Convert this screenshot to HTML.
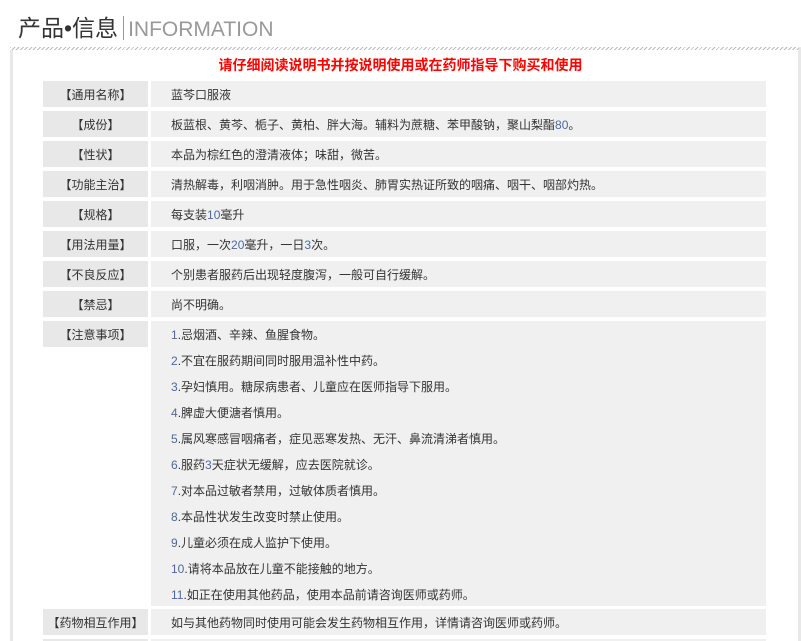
<!DOCTYPE html>
<html style="height:641px;overflow:hidden"><head><meta charset="utf-8"><style>
body{margin:0;width:801px;height:641px;overflow:hidden;background:#fff;font-family:"Liberation Sans","Noto Sans CJK SC",sans-serif;position:relative}
.t{position:absolute;left:18px;top:13px;font-size:23px;color:#333;line-height:30px;white-space:nowrap}
.t .bar{display:inline-block;width:1px;height:24px;background:#999;vertical-align:-4px;margin:0 4px 0 5px}
.t .en{color:#999;font-size:21px;letter-spacing:0}
.box{position:absolute;left:10px;top:47px;width:785px;height:594px;border-left:3px solid #e8e8e8;border-right:3px solid #e8e8e8;background:#fff}
.hatch{position:absolute;left:10px;top:47px;width:789px;height:3px;background:repeating-linear-gradient(135deg,#bbb 0 1px,#fff 1px 3px)}
.red{position:absolute;left:0;width:801px;top:55px;text-align:center;color:#f00;font-weight:bold;font-size:14px;line-height:20px}
.l,.v{position:absolute;font-size:12px;color:#333;line-height:26px;padding-top:1px;height:26px;box-sizing:border-box}
.l{left:43px;width:105px;background:#e8e8e8;text-align:center}
.v{left:151px;width:615px;background:#f0f0f0;padding-left:20px}
.v p{margin:0;height:26px}
.n{color:#4a6aa0}
</style></head><body>
<div class="t">产品•信息<span class="bar"></span><span class="en">INFORMATION</span></div>
<div class="box"></div><div class="hatch"></div>
<div class="red">请仔细阅读说明书并按说明使用或在药师指导下购买和使用</div>

<div class="l" style="top:81px">【通用名称】</div><div class="v" style="top:81px">蓝芩口服液</div>
<div class="l" style="top:111px">【成份】</div><div class="v" style="top:111px">板蓝根、黄芩、栀子、黄柏、胖大海。辅料为蔗糖、苯甲酸钠，聚山梨酯<span class="n">80</span>。</div>
<div class="l" style="top:141px">【性状】</div><div class="v" style="top:141px">本品为棕红色的澄清液体；味甜，微苦。</div>
<div class="l" style="top:171px">【功能主治】</div><div class="v" style="top:171px">清热解毒，利咽消肿。用于急性咽炎、肺胃实热证所致的咽痛、咽干、咽部灼热。</div>
<div class="l" style="top:201px">【规格】</div><div class="v" style="top:201px">每支装<span class="n">10</span>毫升</div>
<div class="l" style="top:231px">【用法用量】</div><div class="v" style="top:231px">口服，一次<span class="n">20</span>毫升，一日<span class="n">3</span>次。</div>
<div class="l" style="top:261px">【不良反应】</div><div class="v" style="top:261px">个别患者服药后出现轻度腹泻，一般可自行缓解。</div>
<div class="l" style="top:291px">【禁忌】</div><div class="v" style="top:291px">尚不明确。</div>
<div class="l" style="top:321px">【注意事项】</div>
<div class="v" style="top:321px;height:285px">
<p><span class="n">1</span>.忌烟酒、辛辣、鱼腥食物。</p>
<p><span class="n">2</span>.不宜在服药期间同时服用温补性中药。</p>
<p><span class="n">3</span>.孕妇慎用。糖尿病患者、儿童应在医师指导下服用。</p>
<p><span class="n">4</span>.脾虚大便溏者慎用。</p>
<p><span class="n">5</span>.属风寒感冒咽痛者，症见恶寒发热、无汗、鼻流清涕者慎用。</p>
<p><span class="n">6</span>.服药<span class="n">3</span>天症状无缓解，应去医院就诊。</p>
<p><span class="n">7</span>.对本品过敏者禁用，过敏体质者慎用。</p>
<p><span class="n">8</span>.本品性状发生改变时禁止使用。</p>
<p><span class="n">9</span>.儿童必须在成人监护下使用。</p>
<p><span class="n">10</span>.请将本品放在儿童不能接触的地方。</p>
<p><span class="n">11</span>.如正在使用其他药品，使用本品前请咨询医师或药师。</p>
</div>
<div class="l" style="top:609px">【药物相互作用】</div><div class="v" style="top:609px">如与其他药物同时使用可能会发生药物相互作用，详情请咨询医师或药师。</div>
<div class="l" style="top:639px"></div><div class="v" style="top:639px"></div>
</body></html>
